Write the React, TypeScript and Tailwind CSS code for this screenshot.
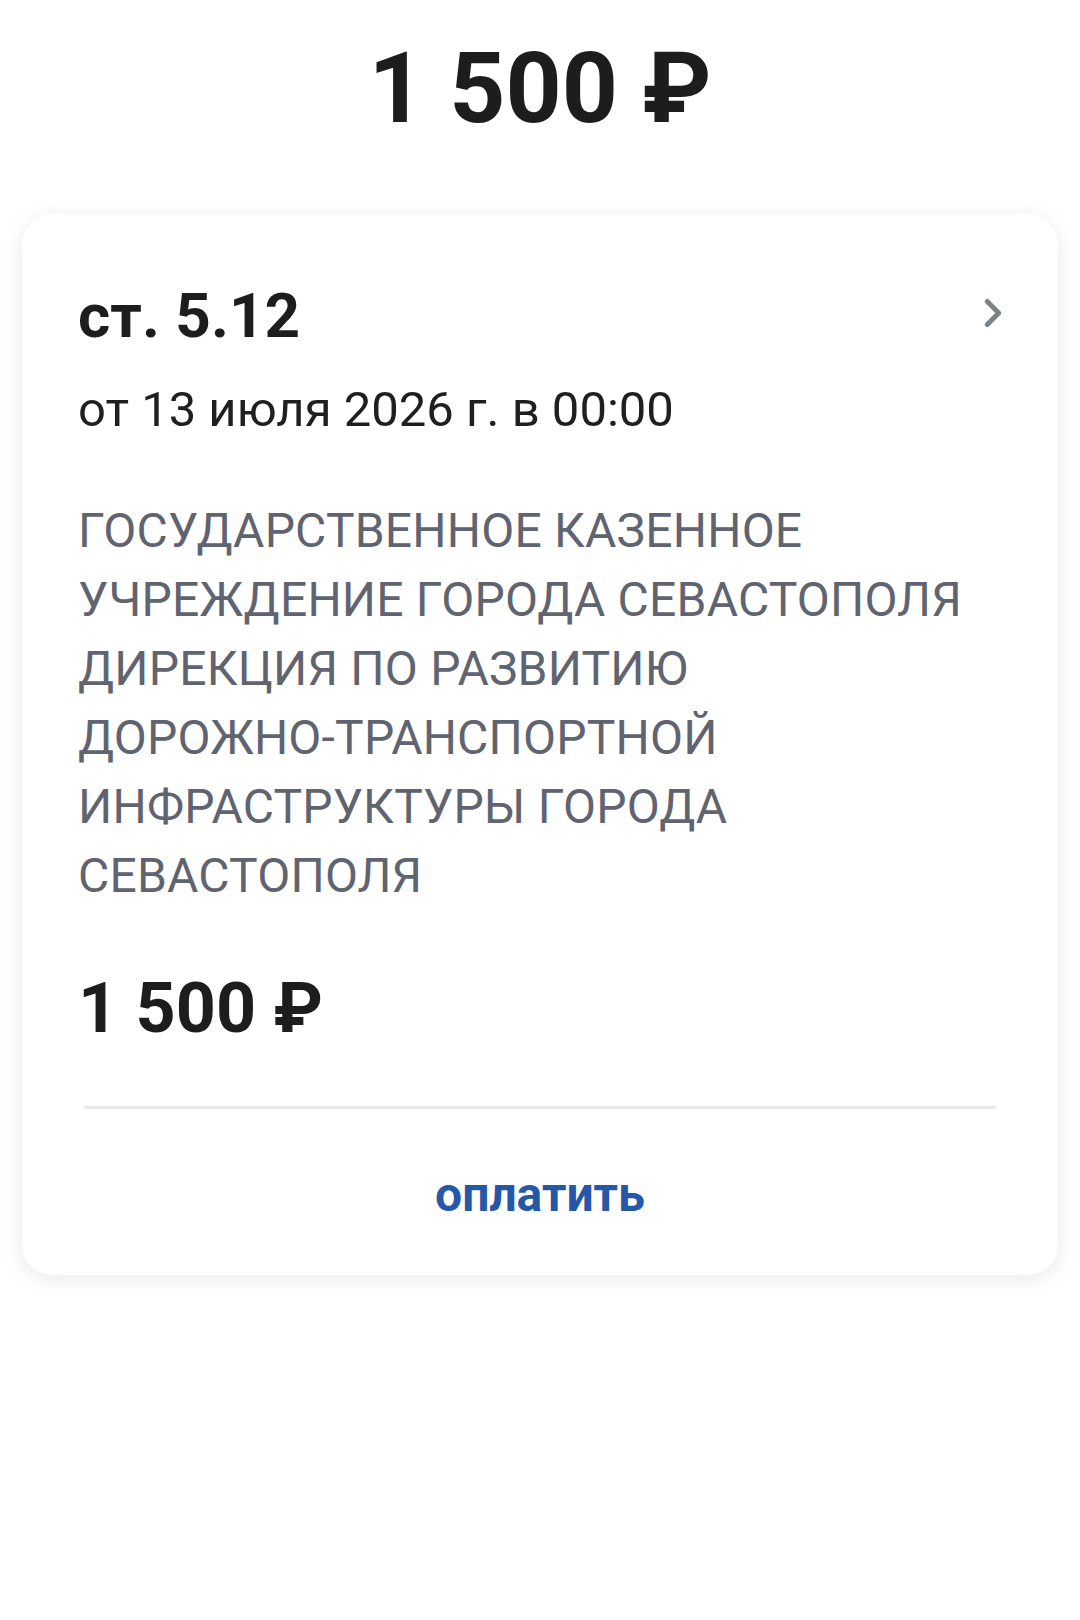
import { ChevronRight } from 'lucide-react';

export default function App() {
  return (
    <div
      className="min-h-[1620px] w-[1080px] bg-white"
      style={{ fontFamily: 'Roboto, "Noto Sans", sans-serif' }}
    >
      {/* Total */}
      <div className="pt-[40px] text-center text-[98px] font-bold leading-[98px] text-[#1d1d1d]">
        1 500 ₽
      </div>

      {/* Fine card */}
      <div className="mx-[22px] mt-[76px] rounded-[30px] bg-white shadow-[0_4px_22px_rgba(0,0,0,0.09)] pt-[71px] pb-[56px]">
        <div className="px-[56px]">
          <div className="flex items-start justify-between">
            <h2 className="text-[62px] font-bold leading-[62px] text-[#1d1d1d]">ст. 5.12</h2>
            <ChevronRight
              className="mt-[5px] -mr-[14px] text-[#7d8289]"
              size={46}
              strokeWidth={2.6}
            />
          </div>

          <p className="mt-[38px] text-[49px] leading-[49px] text-[#1f1f1f]">
            от 13 июля 2026 г. в 00:00
          </p>

          <p className="mt-[62px] text-[48px] leading-[69px] tracking-[0.2px] text-[#5f6470]">
            ГОСУДАРСТВЕННОЕ КАЗЕННОЕ УЧРЕЖДЕНИЕ ГОРОДА СЕВАСТОПОЛЯ ДИРЕКЦИЯ ПО РАЗВИТИЮ{' '}
            <span className="whitespace-nowrap">ДОРОЖНО-ТРАНСПОРТНОЙ</span> ИНФРАСТРУКТУРЫ ГОРОДА
            СЕВАСТОПОЛЯ
          </p>

          <div className="mt-[63px] text-[70px] font-bold leading-[70px] text-[#1d1d1d]">
            1 500 ₽
          </div>
        </div>

        <div className="mx-[62px] mt-[63px] h-[3px] bg-[#ebebeb]" />

        <button className="mt-[62px] block w-full text-center text-[48px] font-bold leading-[48px] text-[#2558a6]">
          оплатить
        </button>
      </div>
    </div>
  );
}
